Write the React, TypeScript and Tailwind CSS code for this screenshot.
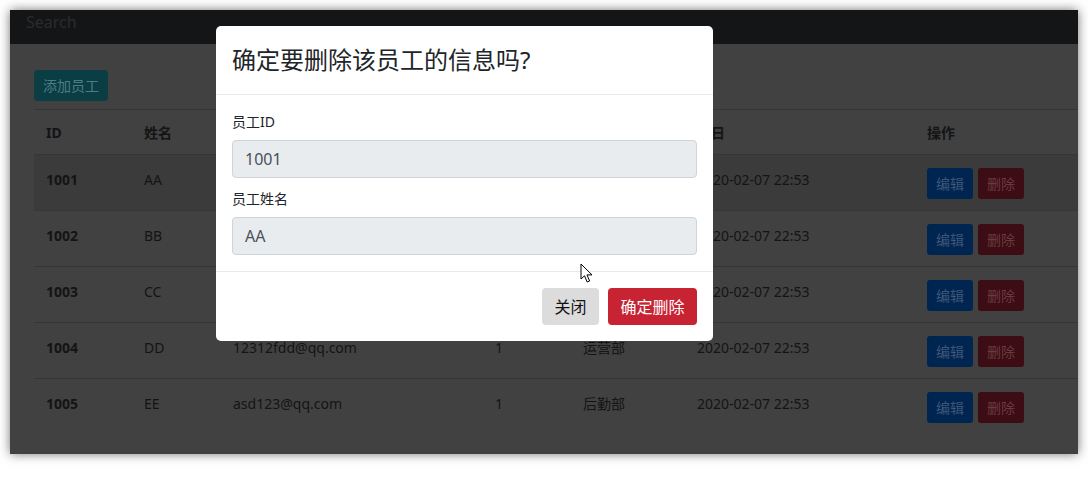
import React from 'react'

const employees = [
  { id: '1001', name: 'AA', email: '', gender: '', dept: '', date: '2020-02-07 22:53' },
  { id: '1002', name: 'BB', email: '', gender: '', dept: '', date: '2020-02-07 22:53' },
  { id: '1003', name: 'CC', email: '', gender: '', dept: '', date: '2020-02-07 22:53' },
  { id: '1004', name: 'DD', email: '12312fdd@qq.com', gender: '1', dept: '运营部', date: '2020-02-07 22:53' },
  { id: '1005', name: 'EE', email: 'asd123@qq.com', gender: '1', dept: '后勤部', date: '2020-02-07 22:53' },
]

const font = { fontFamily: '"Noto Sans", "Noto Sans CJK SC", sans-serif' }

function Cursor() {
  return (
    <svg className="absolute left-[570px] top-[253px]" width="14" height="21" viewBox="0 0 14 21">
      <path
        d="M1 1 L1 16 L4.5 12.8 L7.2 19 L9.6 18 L7 11.9 L12 11.9 Z"
        fill="#fff"
        stroke="#000"
        strokeWidth="1"
        strokeLinejoin="round"
      />
    </svg>
  )
}

export default function App() {
  return (
    <div className="w-[1088px] h-[494px] bg-white p-[10px]" style={font}>
      <div className="relative w-[1068px] h-[444px] overflow-hidden bg-[#414141] shadow-[0_0_10px_rgba(0,0,0,0.55)]">
        {/* navbar */}
        <div className="h-[34px] bg-[#141517] flex items-center pl-4">
          <span className="text-[16px] text-[#2a2c2f] -mt-[11px]">Search</span>
        </div>

        <div className="pl-6 pt-[26px]">
          <button className="h-[31px] px-[9px] rounded-[4px] bg-[#0b3d45] text-[14px] text-[#4b7e86]">
            添加员工
          </button>

          <table className="mt-2 w-[1044px] table-fixed border-collapse text-[14px] text-[#141414]">
            <colgroup>
              <col className="w-[98px]" />
              <col className="w-[89px]" />
              <col className="w-[262px]" />
              <col className="w-[88px]" />
              <col className="w-[114px]" />
              <col className="w-[230px]" />
              <col />
            </colgroup>
            <thead>
              <tr className="border-t border-[#363636]">
                {['ID', '姓名', '邮箱', '性别', '部门', '生日', '操作'].map((h) => (
                  <th key={h} className="h-[45px] px-3 text-left font-bold leading-[21px]">
                    {h}
                  </th>
                ))}
              </tr>
            </thead>
            <tbody>
              {employees.map((e, i) => (
                <tr
                  key={e.id}
                  className={
                    'h-[56px] border-t border-[#363636] ' + (i === 0 ? 'bg-[#3b3b3b]' : '')
                  }
                >
                  <td className="px-3 pt-[13px] align-top font-bold leading-[24px]">{e.id}</td>
                  <td className="px-3 pt-[13px] align-top leading-[24px]">{e.name}</td>
                  <td className="px-3 pt-[13px] align-top leading-[24px]">{e.email}</td>
                  <td className="px-3 pt-[13px] align-top leading-[24px]">{e.gender}</td>
                  <td className="px-3 pt-[13px] align-top leading-[24px]">{e.dept}</td>
                  <td className="px-3 pt-[13px] align-top leading-[24px]">{e.date}</td>
                  <td className="px-3 pt-[13px] align-top">
                    <div className="flex gap-[5px]">
                      <button className="h-[31px] w-[46px] rounded-[3px] bg-[#002550] text-[14px] text-[#3f5678]">
                        编辑
                      </button>
                      <button className="h-[31px] w-[46px] rounded-[3px] bg-[#3c0d14] text-[14px] text-[#6b3940]">
                        删除
                      </button>
                    </div>
                  </td>
                </tr>
              ))}
            </tbody>
          </table>
        </div>

        {/* modal */}
        <div className="absolute left-[206px] top-[16px] w-[497px] rounded-[5px] bg-white text-[#212529]">
          <div className="px-4 pt-4 pb-4 border-b border-[#e9ecef]">
            <h3 className="text-[24px] leading-[36px]">确定要删除该员工的信息吗?</h3>
          </div>
          <div className="px-4 pt-4 pb-4">
            <label className="block text-[14px] leading-[21px] mb-2">员工ID</label>
            <div className="h-[38px] rounded-[4px] border border-[#ced4da] bg-[#e9ecef] px-3 flex items-center text-[16px] text-[#495057]">
              1001
            </div>
            <label className="block text-[14px] leading-[21px] mt-[10px] mb-2">员工姓名</label>
            <div className="h-[38px] rounded-[4px] border border-[#ced4da] bg-[#e9ecef] px-3 flex items-center text-[16px] text-[#495057]">
              AA
            </div>
          </div>
          <div className="border-t border-[#e9ecef] px-4 pt-4 pb-4 flex justify-end gap-[9px]">
            <button className="h-[37px] w-[57px] rounded-[4px] bg-[#dcdcdc] text-[16px] text-[#111]">
              关闭
            </button>
            <button className="h-[37px] w-[89px] rounded-[4px] bg-[#c82333] text-[16px] text-white">
              确定删除
            </button>
          </div>
        </div>

        <Cursor />
      </div>
    </div>
  )
}
